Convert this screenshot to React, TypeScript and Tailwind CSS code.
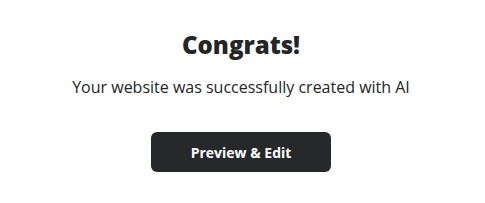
import React from 'react';

export default function App() {
  return (
    <div
      className="w-[485px] h-[203px] bg-white flex flex-col items-center pt-[29px] pr-[3px]"
      style={{ fontFamily: '"Open Sans", sans-serif' }}
    >
      <h1 className="text-[24px] leading-[32px] font-extrabold text-[#232526]">Congrats!</h1>
      <p className="mt-[14px] text-[16px] leading-[24px] text-[#232526]">
        Your website was successfully created with AI
      </p>
      <button className="mt-[33px] w-[180px] h-[40px] rounded-[6px] bg-[#262829] text-white text-[14px] font-bold">
        Preview &amp; Edit
      </button>
    </div>
  );
}
